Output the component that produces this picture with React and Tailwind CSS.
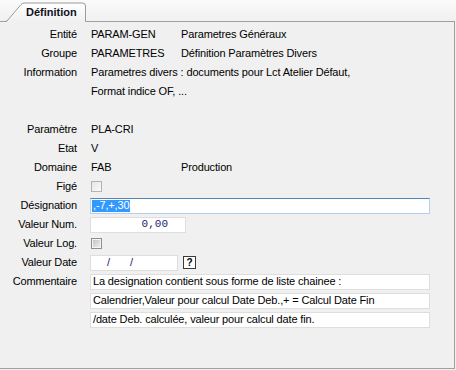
import React from 'react';

const Row = ({ label, children }) => (
    <div className="flex h-[19px] items-center">
        <div className="w-[77px] shrink-0 text-right">{label}</div>
        <div className="ml-[13px] flex flex-1 items-center">{children}</div>
    </div>
);

const Box = ({ className = '', children }) => (
    <div className={`flex h-[16px] items-center border bg-white ${className}`}>{children}</div>
);

const Check = ({ dark }) =>
    dark ? (
        <div className="ml-[1px] flex h-[11px] w-[11px] items-center justify-center border border-[#8e8e8e] bg-[#f4f4f4]">
            <div className="h-[7px] w-[7px] bg-gradient-to-br from-[#c4c4c4] to-[#ececec]" />
        </div>
    ) : (
        <div className="ml-[1px] h-[11px] w-[11px] border border-[#b3b3b3] bg-gradient-to-br from-[#e6e6e6] to-[#fafafa]" />
    );

const App = () => {
    return (
        <div
            className="h-[370px] w-[456px] bg-[#f0f0f0] text-[11px] leading-none tracking-[-0.15px] text-black"
            style={{ fontFamily: '"Liberation Sans", Arial, sans-serif' }}
        >
            {/* tab strip */}
            <div className="relative h-[22px] bg-gradient-to-b from-[#fbfbfb] to-[#f0f0f0]">
                <div className="absolute bottom-0 left-0 h-[1px] w-[455px] bg-[#a0a0a0]" />
                <div className="absolute left-[5px] top-[2px] h-[20px] w-[82px]">
                    <svg width="82" height="20" className="absolute left-0 top-0">
                        <defs>
                            <linearGradient id="tabg" x1="0" y1="0" x2="0" y2="1">
                                <stop offset="0" stopColor="#ffffff" />
                                <stop offset="1" stopColor="#f0f0f0" />
                            </linearGradient>
                        </defs>
                        <path d="M0.5 20 L2 19 L16 2.5 Q17.5 1 19.5 1 L77.5 1 Q80.5 1 80.5 4 L80.5 20 Z" fill="url(#tabg)" stroke="none" />
                        <path d="M0 19.5 L2 19 L16 2.5 Q17.5 1 19.5 1 L77.5 1 Q80.5 1 80.5 4 L80.5 19.5" fill="none" stroke="#9a9a9a" strokeWidth="1" />
                    </svg>
                    <span className="absolute left-[21px] top-[5px] font-bold tracking-normal text-[#101020]">Définition</span>
                </div>
            </div>

            {/* panel */}
            <div className="h-[347px] w-[455px] border-b border-r border-[#a0a0a0] pt-[3px]">
                <Row label="Entité">
                    <span className="w-[91px] pl-[1px]">PARAM-GEN</span>
                    <span>Parametres Généraux</span>
                </Row>
                <Row label="Groupe">
                    <span className="w-[91px] pl-[1px]">PARAMETRES</span>
                    <span>Définition Paramètres Divers</span>
                </Row>
                <Row label="Information">
                    <span className="pl-[1px]">Parametres divers : documents pour Lct Atelier Défaut,</span>
                </Row>
                <Row label="">
                    <span className="pl-[1px]">Format indice OF, ...</span>
                </Row>
                <Row label="" />
                <Row label="Paramètre">
                    <span className="pl-[1px]">PLA-CRI</span>
                </Row>
                <Row label="Etat">
                    <span className="pl-[1px]">V</span>
                </Row>
                <Row label="Domaine">
                    <span className="w-[91px] pl-[1px]">FAB</span>
                    <span>Production</span>
                </Row>
                <Row label="Figé">
                    <Check />
                </Row>
                <Row label="Désignation">
                    <Box className="w-[340px] border-[#b4d0ea] border-t-[#4f86b8] bg-[#dce6ff]">
                        <span className="ml-[1px] flex h-[12px] items-center bg-[#3399ff] px-[1px] text-white">,-7,+,30</span>
                    </Box>
                </Row>
                <Row label="Valeur Num.">
                    <Box className="w-[96px] justify-end border-[#dedede] pr-[17px]">
                        <span className="tracking-normal text-[#1b1b6e]" style={{ fontFamily: '"Liberation Mono", monospace' }}>
                            0,00
                        </span>
                    </Box>
                </Row>
                <Row label="Valeur Log.">
                    <Check dark />
                </Row>
                <Row label="Valeur Date">
                    <Box className="w-[88px] border-[#dedede] pl-[16px] text-[#1b1b6e]">
                        <span>/</span>
                        <span className="ml-[20px]">/</span>
                    </Box>
                    <div className="ml-[5px] flex h-[13px] w-[13px] items-center justify-center border border-[#3a3a3a] bg-white text-[10px] font-bold">
                        ?
                    </div>
                </Row>
                <Row label="Commentaire">
                    <Box className="w-[340px] border-[#dedede] pl-[2px]">La designation contient sous forme de liste chainee :</Box>
                </Row>
                <Row label="">
                    <Box className="w-[340px] border-[#dedede] pl-[2px]">Calendrier,Valeur pour calcul Date Deb.,+ = Calcul Date Fin</Box>
                </Row>
                <Row label="">
                    <Box className="w-[340px] border-[#dedede] pl-[2px]">/date Deb. calculée, valeur pour calcul date fin.</Box>
                </Row>
            </div>
        </div>
    );
};

export default App;
